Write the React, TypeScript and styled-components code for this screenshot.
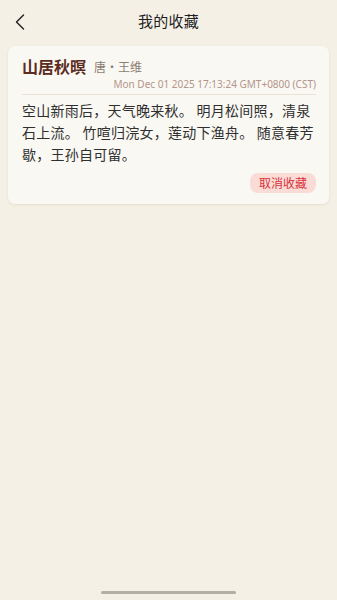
import React from "react";
import styled, { createGlobalStyle } from "styled-components";

const Global = createGlobalStyle`
  html, body { margin: 0; padding: 0; background: #f5f0e5; }
  body { font-family: "Noto Sans CJK SC", "Noto Sans", sans-serif; }
  #root { min-height: 600px; }
`;

const Page = styled.div`
  width: 337px;
  height: 600px;
  background: #f5f0e5;
  display: flex;
  flex-direction: column;
  position: relative;
  overflow: hidden;
`;

const Header = styled.div`
  height: 42px;
  display: flex;
  align-items: center;
  justify-content: center;
  position: relative;
`;

const BackButton = styled.div`
  position: absolute;
  left: 12px;
  top: 12px;
  width: 16px;
  height: 20px;
  display: flex;
  align-items: center;
  justify-content: center;
`;

const HeaderTitle = styled.div`
  font-size: 15px;
  color: #1f1f1f;
  line-height: 20px;
  letter-spacing: 0.3px;
`;

const List = styled.div`
  padding: 4px 8px 0 8px;
  display: flex;
  flex-direction: column;
  gap: 10px;
`;

const Card = styled.div`
  background: #faf8f3;
  border-radius: 7px;
  padding: 10px 13px 11px 14px;
  box-shadow: 0 1px 3px rgba(120, 100, 70, 0.12);
  display: flex;
  flex-direction: column;
`;

const TitleRow = styled.div`
  display: flex;
  align-items: center;
  gap: 8px;
  height: 20px;
`;

const PoemTitle = styled.div`
  font-size: 16px;
  line-height: 20px;
  font-weight: 700;
  color: #5b2d22;
`;

const Author = styled.div`
  font-size: 12px;
  line-height: 16px;
  padding-top: 1px;
  color: #8c7d72;
`;

const DateText = styled.div`
  font-family: "Noto Sans", sans-serif;
  font-size: 10px;
  line-height: 12px;
  margin-top: 2px;
  color: #b3958a;
  text-align: right;
`;

const Divider = styled.div`
  height: 1px;
  background: #ebe3d6;
  margin-top: 4px;
`;

const Body = styled.div`
  margin-top: 4px;
  font-size: 14px;
  line-height: 22px;
  letter-spacing: 0.25px;
  color: #2f2f2f;
`;

const Actions = styled.div`
  display: flex;
  justify-content: flex-end;
  margin-top: 8px;
`;

const UnfavButton = styled.button`
  border: none;
  background: #fadcd7;
  color: #d8323a;
  font-family: "Noto Sans CJK SC", sans-serif;
  font-size: 12px;
  line-height: 20px;
  height: 20px;
  padding: 0 9px;
  border-radius: 8px;
`;

const HomeIndicator = styled.div`
  position: absolute;
  left: 101px;
  bottom: 6px;
  width: 135px;
  height: 3px;
  border-radius: 2px;
  background: #b4afa3;
`;

export default function App() {
  return (
    <>
      <Global />
      <Page>
        <Header>
          <BackButton>
            <svg width="12" height="16" viewBox="0 0 12 16" fill="none">
              <path d="M9.5 1 L2.5 8 L9.5 15" stroke="#1f1f1f" strokeWidth="1.4" strokeLinecap="round" strokeLinejoin="round" />
            </svg>
          </BackButton>
          <HeaderTitle>我的收藏</HeaderTitle>
        </Header>
        <List>
          <Card>
            <TitleRow>
              <PoemTitle>山居秋暝</PoemTitle>
              <Author>唐・王维</Author>
            </TitleRow>
            <DateText>Mon Dec 01 2025 17:13:24 GMT+0800 (CST)</DateText>
            <Divider />
            <Body>空山新雨后，天气晚来秋。 明月松间照，清泉石上流。 竹喧归浣女，莲动下渔舟。 随意春芳歇，王孙自可留。</Body>
            <Actions>
              <UnfavButton>取消收藏</UnfavButton>
            </Actions>
          </Card>
        </List>
        <HomeIndicator />
      </Page>
    </>
  );
}
